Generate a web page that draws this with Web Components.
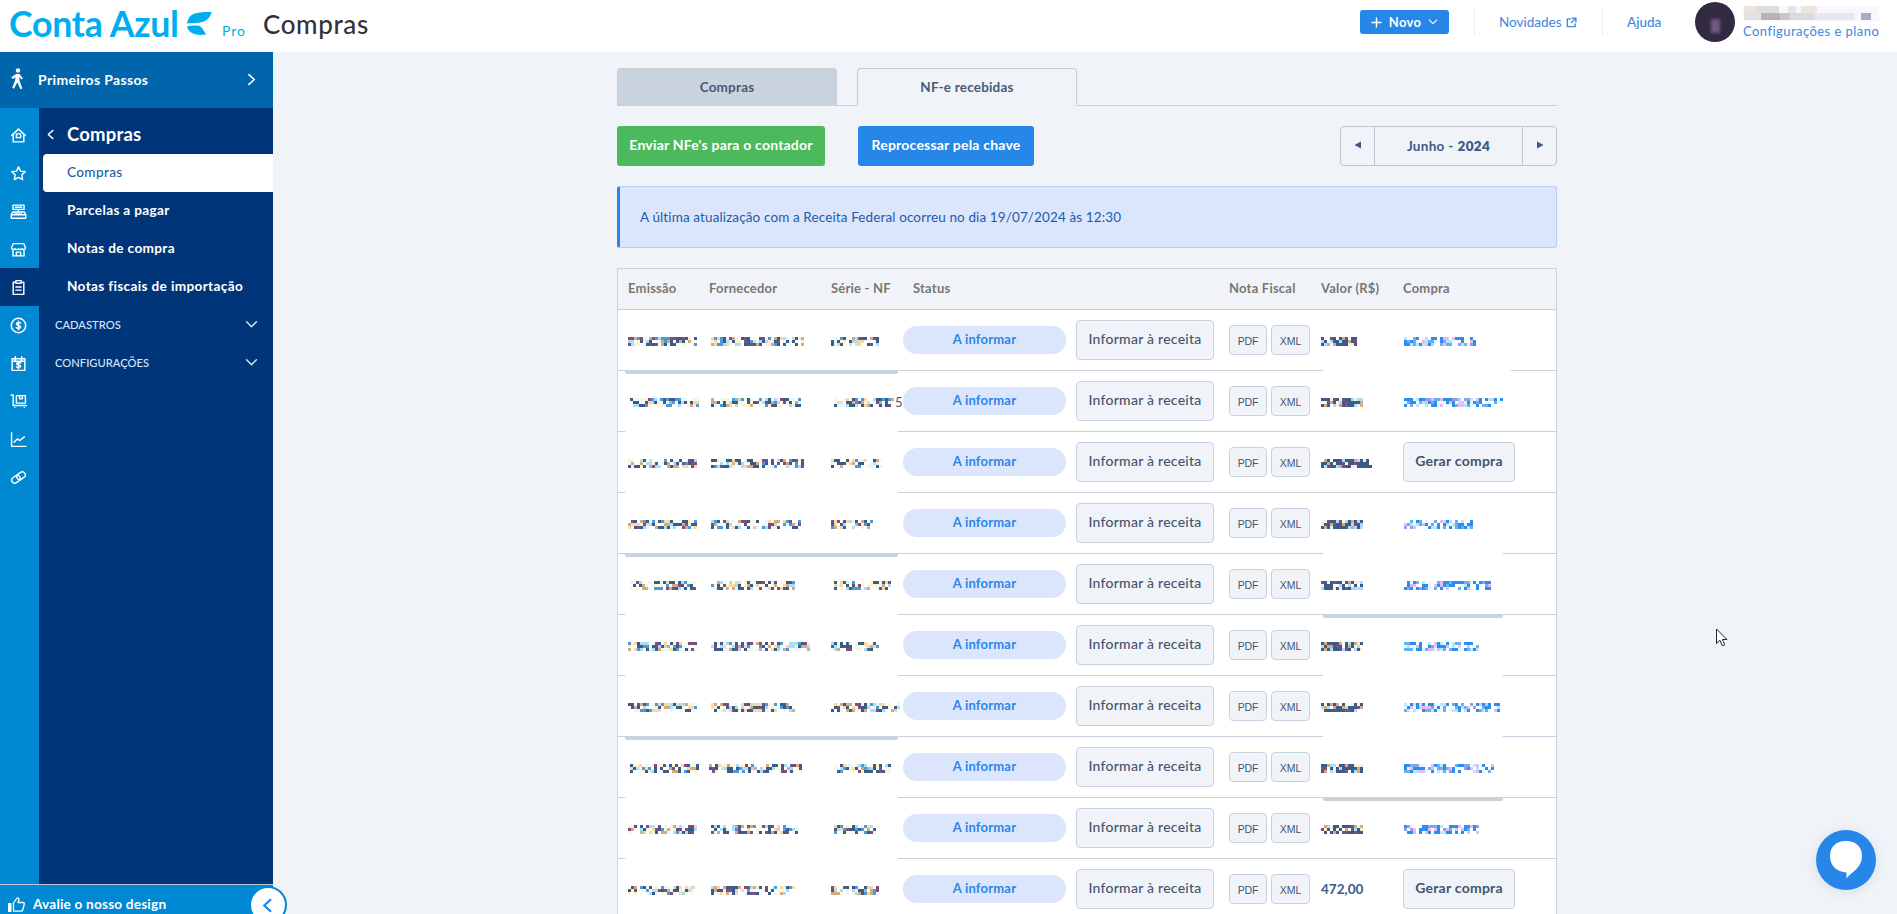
<!DOCTYPE html>
<html lang="pt-BR"><head><meta charset="utf-8"><title>Compras</title>
<style>
html,body{margin:0;height:914px;overflow:hidden;background:#f0f4f9;font-family:Lato,"Liberation Sans",sans-serif}
</style></head><body>
<app-shell></app-shell>
<script>
const ICON={
home:'<path d="M1.500 8 8 2l6.500 6"/><path d="M3 6.800V14h10V6.800"/><rect x="6" y="6.500" width="4" height="3.500"/>',
star:'<path d="M8 1.800l1.900 4 4.400.6-3.200 3 .8 4.400L8 11.700l-3.900 2.100.8-4.400-3.200-3 4.400-.6z"/>',
reg:'<path d="M2.800 2h10.400v4H2.800zM8 6v2.500M5 4h6"/><path d="M2.500 8.500h11l1.300 2.500v3.300H1.200V11zM1.200 11h13.600M4.500 9.800h.1M6.500 9.800h.1M8.500 9.800h.1M10.500 9.800h.1"/>',
store:'<path d="M3 2.500h10l1.700 4a1.900 1.900 0 0 1-3.300.8 2.300 2.300 0 0 1-3.400 0 2.300 2.300 0 0 1-3.400 0 1.900 1.900 0 0 1-3.300-.8z"/><path d="M2.800 8.500V14h10.400V8.500M6 14v-3.500h4V14"/>',
clip:'<path d="M5 3H3v11.500h10V3h-2"/><path d="M5.500 1.500h5V4h-5zM5.500 7.500h5M5.500 10.500h5"/>',
money:'<circle cx="8" cy="8" r="6.800"/><path d="M10 5.800c-.5-.8-3.800-1.200-3.900.8C6 8.400 10 7.500 10 9.400 10 11 6.500 11 6 10M8 3.900v8.200"/>',
cal:'<path d="M2 3.500h12v11H2zM5 1.500v3.500M11 1.500v3.500M2 5.800h12"/><path d="M10 7.600c-.5-.6-3.600-.9-3.700.6-.1 1.500 3.700.8 3.700 2.300 0 1.400-3.300 1.400-3.800.6M8 6.500v6.500"/>',
cart:'<path d="M1 1.800h2v10h12.500"/><path d="M6 2.500h8.500V9.500H6zM9 2.500v3h2.600v-3"/><path d="M4.500 13.500h.1M13.500 13.500h.1"/>',
chart:'<path d="M1.500 1.500V14.500H15M3.800 10.500l3-3 2.400 1.500 4.300-3.500"/>',
link:'<g transform="rotate(-35 8 8)"><rect x=".8" y="5.200" width="8.600" height="5.600" rx="2.800"/><rect x="6.600" y="5.200" width="8.600" height="5.600" rx="2.800"/></g>'
};
const svg=(k,s=16,sw=1.35,c='currentColor')=>`<svg width="${s}" height="${s}" viewBox="0 0 16 16" fill="none" stroke="${c}" stroke-width="${sw}" stroke-linecap="round" stroke-linejoin="round">${ICON[k]}</svg>`;
const chev=(d,c='#fff',s=12,sw=1.4)=>{const p={r:'M4.500 1.500 9.500 6l-5 4.500',l:'M7.500 1.500 2.500 6l5 4.500',d:'M1.500 3.500 6 8l4.500-4.500'}[d];return `<svg width="${s}" height="${s}" viewBox="0 0 12 12" fill="none" stroke="${c}" stroke-width="${sw}" stroke-linecap="round" stroke-linejoin="round"><path d="${p}"/></svg>`};
function def(name,css,html){customElements.define(name,class extends HTMLElement{constructor(){super();this.attachShadow({mode:'open'}).innerHTML=`<style>${css}</style>`+(typeof html==='function'?'':html)}
 connectedCallback(){if(typeof html==='function'&&!this._d){this._d=1;this.shadowRoot.innerHTML+=html(this)}}})}
const PAL={
 warm:['#fff','#fff','#fff','#fdf3d0','#a9defb','#3c5b87','#3c5b87','#3c5b87','#7a4f82','#d6a97e','#4a9ad8','#f6d9a8','#e8f6fd','#fdf8e0'],
 buy:['#fff','#fff','#fff','#2d8cf0','#2d8cf0','#2d8cf0','#e4bcec','#b6e8fc','#8ea2ea','#5bb4f5','#e8f6fd'],
 val:['#fff','#3c5b87','#3c5b87','#3c5b87','#3c5b87','#3c5b87','#d6a97e','#7a4f82','#a9defb','#f8f0d8']
};
def('pix-el',':host{display:inline-block;line-height:0;vertical-align:middle}svg{display:block;overflow:visible}',h=>{
 const w=+h.getAttribute('w'),rows=+(h.getAttribute('rows')||3),cell=+(h.getAttribute('cell')||3);
 let s=(+h.getAttribute('seed')||1)*7919+13;const pal=PAL[h.getAttribute('pal')||'warm'];
 const rnd=()=>(s=(s*1664525+1013904223)>>>0)/4294967296;
 let o='';const n=Math.round(w/cell);
 for(let y=0;y<rows;y++)for(let x=0;x<n;x++){rnd();const c=pal[Math.floor(rnd()*pal.length)];if(c!=='#fff')o+=`<rect x="${x*cell}" y="${y*cell}" width="${cell}" height="${cell}" fill="${c}"/>`}
 return `<svg width="${w}" height="${rows*cell}" shape-rendering="crispEdges">${o}</svg>`});

def('top-bar',`:host{display:flex;align-items:center;height:52px;background:#fff;flex:none;color:#2687e9}
.logo{font:700 35.700px/1 Lato,sans-serif;color:#00aeef;margin:0 0 5px 9px;letter-spacing:-.3px;white-space:nowrap;width:167px;flex:none}
.leaf{margin:0 0 6px 10px;display:block;flex:none}
.pro{font:400 14px/1 Lato,sans-serif;color:#00aeef;margin:9px 0 0 10px;letter-spacing:.9px;width:21px;flex:none}
.ttl{font:500 26px/1 Lato,sans-serif;color:#33323a;margin:0 0 5px 20px;letter-spacing:.6px}
.r{display:flex;align-items:center;margin-left:auto;margin-bottom:8px}
.novo{display:flex;align-items:center;justify-content:center;gap:7px;width:89px;height:24px;background:#2687e9;border-radius:3px;color:#fff;font:700 13px Lato,sans-serif;letter-spacing:.3px}
.div{width:1px;height:26px;background:#e8edf3}
.lnk{font:400 13.500px Lato,sans-serif;color:#3e86e0;display:flex;align-items:center;justify-content:space-between;white-space:nowrap}
.av{width:40px;height:40px;border-radius:50%;background:#322a42;position:relative;overflow:hidden}
.av i{position:absolute;left:16px;top:17px;width:9px;height:14px;background:#6d5a80;filter:blur(1.500px)}
.u{margin-left:8px;margin-right:18px;width:136px;display:flex;flex-direction:column;gap:3px}
.u span{font:400 13px/14px Lato,sans-serif;color:#3e86e0;white-space:nowrap;letter-spacing:.45px}`,
`<span class="logo">Conta Azul</span>
<svg class="leaf" width="26" height="24" viewBox="0 0 26 24" fill="#00aeef"><path d="M1 12.500C1.500 8 4 4.500 8 2.800 12 1 19 .8 25.500 1 24.500 7.500 19 11 13 11.800 8.500 12.300 4.500 12.300 1 12.500z"/><path d="M1 15.500C6 14.500 11 14.300 13.500 15 16 15.800 18 20 20 23.500 14 24.200 10 24 7 22.500 3.500 21 1.500 18.500 1 15.500z"/></svg>
<span class="pro">Pro</span><span class="ttl">Compras</span>
<div class="r"><div class="novo"><svg width="11" height="11" viewBox="0 0 11 11" stroke="#fff" stroke-width="1.500" stroke-linecap="round"><path d="M5.500 1v9M1 5.500h9"/></svg><span>Novo</span>${chev('d','#fff',10,1.3)}</div>
<div class="div" style="margin-left:25px"></div>
<div class="lnk" style="margin-left:24px;width:78px"><span>Novidades</span><svg width="11" height="11" viewBox="0 0 12 12" fill="none" stroke="#3e86e0" stroke-width="1.500"><path d="M5 2H1.500v8.500H10V7M6 1.200h4.800V6M10.500 1.500 5.500 6.500"/></svg></div>
<div class="div" style="margin-left:25px"></div>
<div class="lnk" style="margin-left:24px;margin-right:32px;width:36px;font-weight:500">Ajuda</div>
<div class="av"><i></i></div>
<div class="u"><svg width="136" height="15" shape-rendering="crispEdges"><rect width="136" height="15" fill="#f6f8fb"/><rect x="1" y="0" width="12" height="7" fill="#ede3dc"/><rect x="13" y="0" width="23" height="7" fill="#dddde0"/><rect x="45" y="0" width="8" height="7" fill="#e2e4e8"/><rect x="58" y="0" width="16" height="7" fill="#eee4de"/><rect x="1" y="7" width="17" height="7" fill="#e2e2e4"/><rect x="18" y="7" width="19" height="7" fill="#bdb0b2"/><rect x="37" y="7" width="10" height="7" fill="#cfc5c4"/><rect x="47" y="7" width="25" height="7" fill="#d9dbdf"/><rect x="72" y="7" width="40" height="7" fill="#e6e8ec"/><rect x="118" y="7" width="10" height="7" fill="#a8adc2"/></svg><span>Configurações e plano</span></div></div>`);

def('nav-rail',`:host{display:flex;flex-direction:column;width:39px;flex:none;background:#0089d2;color:#fff;padding-top:8px;box-sizing:border-box}
div{height:38px;display:flex;align-items:center;justify-content:center;flex:none;padding-right:2px}
div.on{background:#00357a}`,
()=>['home','star','reg','store','clip','money','cal','cart','chart','link'].map((k,i)=>`<div class="${i==4?'on':''}">${svg(k,17)}</div>`).join(''));

def('menu-item',`:host{display:flex;align-items:center;height:38px;box-sizing:border-box;color:#fff;font:700 13.600px Lato,sans-serif;padding:0 0 2px 28px;letter-spacing:.35px}
:host([active]){background:#fff;color:#1a5fa3;border-radius:4px 0 0 4px;margin-left:4px;padding-left:24px;font-weight:500}`,'<slot></slot>');
def('menu-group',`:host{display:flex;align-items:center;justify-content:space-between;height:38px;box-sizing:border-box;color:#d3e8f7;font:500 11.200px Lato,sans-serif;padding:0 15px 2px 16px}`,`<slot></slot>${chev('d','#d3e8f7',13,1.3)}`);

def('side-bar',`:host{display:flex;flex-direction:column;width:273px;flex:none;background:#00357a;position:relative}
.pp{height:56px;box-sizing:border-box;background:#0065ab;display:flex;align-items:center;color:#fff;font:700 14px Lato,sans-serif;padding:0 16px 2px 9px;flex:none;letter-spacing:.35px}
.pp span{flex:1;margin-left:13px}
.body{flex:1;display:flex;min-height:0}
.panel{flex:1;display:flex;flex-direction:column}
.head{height:46px;display:flex;align-items:center;color:#fff;font:700 18.500px Lato,sans-serif;padding-left:7px;gap:10px;letter-spacing:.2px;padding-top:6px;box-sizing:border-box;flex:none}
.foot{height:39px;margin-bottom:-9px;background:#0089d2;border-top:1px solid #b9c7d6;display:flex;align-items:center;color:#fff;font:700 13.600px Lato,sans-serif;padding:0 0 0 8px;gap:8px;flex:none;letter-spacing:.2px;box-sizing:border-box}
.col{position:absolute;left:249px;top:834px;width:34px;height:34px;border:2px solid #0089d2;border-radius:50%;background:#fff;display:flex;align-items:center;justify-content:center}`,
`<div class="pp"><svg width="16" height="22" viewBox="0 0 16 22" fill="#fff"><circle cx="9" cy="2.500" r="2.200"/><path d="M7 6h3.500l3.500 4.500-1.400 1-2.300-2.500.3 4 2.800 7.500-2 .8-3.100-7-3.300 6.500-1.800-1 3-7.500.2-3.300-1.800 2L2 9.500z"/></svg><span>Primeiros Passos</span>${chev('r','#fff',13,1.5)}</div>
<div class="body"><nav-rail></nav-rail><div class="panel">
<div class="head">${chev('l','#fff',11,1.5)}<span>Compras</span></div>
<menu-item active>Compras</menu-item><menu-item>Parcelas a pagar</menu-item><menu-item>Notas de compra</menu-item><menu-item>Notas fiscais de importação</menu-item>
<menu-group>CADASTROS</menu-group><menu-group>CONFIGURAÇÕES</menu-group></div></div>
<div class="foot"><svg width="17" height="15" viewBox="0 0 17 15" fill="none" stroke="#fff" stroke-width="1.300" stroke-linejoin="round"><path fill="#fff" stroke="none" d="M0 6h3.500v9H0z"/><path d="M5.500 6 9 1c1.500-.6 2.300.6 1.800 2L10 5.500h5c1.200 0 1.500 1 1.200 2l-1.500 5.500c-.2.800-.8 1.200-1.500 1.200H5.500z"/></svg><span>Avalie o nosso design</span></div>
<div class="col">${chev('l','#2687e9',15,1.800)}</div>`);

def('tab-bar',`:host{display:flex;height:38px;gap:20px;border-bottom:1px solid #c5d2e0;box-sizing:border-box;flex:none}
.t{width:220px;height:38px;box-sizing:border-box;border:1px solid #c5ccd5;border-radius:4px 4px 0 0;display:flex;align-items:center;justify-content:center;font:700 13.500px Lato,sans-serif;color:#475a78;letter-spacing:.2px}
.a{background:#c9d3dd;border-bottom:0;height:37px}
.b{background:#f0f4f9;border-bottom:1px solid #f0f4f9}`,
`<div class="t a">Compras</div><div class="t b">NF-e recebidas</div>`);

def('solid-btn',`:host{display:flex;align-items:center;justify-content:center;height:40px;box-sizing:border-box;padding-bottom:3px;border-radius:3px;color:#fff;font:700 14px Lato,sans-serif;letter-spacing:.2px;background:var(--bg);flex:none}`,'<slot></slot>');

def('month-picker',`:host{display:flex;width:217px;height:40px;box-sizing:border-box;border:1px solid #bfc6cf;border-radius:4px;margin-left:auto;color:#3b5a85;font:700 13.500px Lato,sans-serif;letter-spacing:.3px}
.n{width:33px;display:flex;align-items:center;justify-content:center;flex:none;padding-bottom:3px}
.m{flex:1;border-left:1px solid #bfc6cf;border-right:1px solid #bfc6cf;display:flex;align-items:center;justify-content:center}
.m b{font-weight:800;margin-left:4px}`,
`<div class="n"><svg width="8" height="8" viewBox="0 0 8 8" fill="#3b5a85"><path d="M7 .5v7L.5 4z"/></svg></div><div class="m">Junho - <b>2024</b></div><div class="n"><svg width="8" height="8" viewBox="0 0 8 8" fill="#3b5a85"><path d="M1 .5v7L7.500 4z"/></svg></div>`);

def('info-alert',`:host{display:flex;align-items:center;height:62px;box-sizing:border-box;background:#dbe6fd;border:1px solid #b4cdf9;border-left:3px solid #2687e9;border-radius:3px;padding-left:20px;color:#1c5ba8;font:400 13.500px Lato,sans-serif;letter-spacing:.12px;margin-top:20px;flex:none}`,'<slot></slot>');

def('ghost-btn',`:host{display:flex;align-items:center;justify-content:center;box-sizing:border-box;height:40px;width:var(--w,138px);padding-bottom:3px;background:#f0f4f9;border:1.500px solid #c9d3e0;border-radius:4px;color:#44546f;font:500 14px Lato,sans-serif;letter-spacing:.25px;flex:none}
:host([strong]){font-weight:700}
:host([small]){height:30px;padding:2px 0 0;font:500 10.500px "Liberation Sans",sans-serif;letter-spacing:-.1px}`,'<slot></slot>');

def('status-pill',`:host{display:flex;align-items:center;justify-content:center;width:163px;height:28px;box-sizing:border-box;padding-bottom:2px;border-radius:14px;background:#dbe6fd;color:#2f84e6;font:700 13px Lato,sans-serif;letter-spacing:.2px}`,'<slot></slot>');

const COLS='grid-template-columns:81px 122px 72px 163px 10px 138px 15px 81px 11px 82px 1fr';
def('nf-head',`:host{display:grid;${COLS};align-items:center;height:42px;box-sizing:border-box;border-top:1px solid #c9d3e0;border-bottom:1px solid #c9d3e0;padding:0 0 2px 10px;color:#7b7672;font:700 13px Lato,sans-serif;letter-spacing:.22px}
span{white-space:nowrap}.st{padding-left:10px;grid-column:span 3}`,
`<span>Emissão</span><span>Fornecedor</span><span>Série - NF</span><span class="st">Status</span><span></span><span>Nota Fiscal</span><span></span><span>Valor (R$)</span><span>Compra</span>`);

def('nf-row',`:host{display:grid;${COLS};align-items:center;height:61px;box-sizing:border-box;border-bottom:1px solid #c9d3e0;background:#fff;padding-left:10px;position:relative;overflow:visible}
.c{display:flex;align-items:center;margin-top:2px}
.pair{display:flex;gap:4px}
.pair ghost-btn:first-child{--w:38px}.pair ghost-btn:last-child{--w:39px}
.v{font:700 13.500px Lato,sans-serif;color:#3b5a85;padding-bottom:1px}
.five{font:400 13px Lato,sans-serif;color:#4a5a70;margin-left:1px}
.ln{position:absolute;z-index:1;border-radius:0 0 2px 2px}
.mask{height:2px;bottom:-1.500px;background:#fff}
.thick{height:3px;bottom:-4px;background:#c9d3de}`,
h=>{const d=JSON.parse(h.getAttribute('d'));const seed=+h.getAttribute('n');
 const mos=(v,p,i)=>{const [off,w]=v;return `<pix-el style="margin-left:${off}px" w="${w}" seed="${seed*10+i}" pal="${p}"></pix-el>`};
 const lm=d.l?`<i class="ln ${d.l}" style="left:7px;width:273px"></i>`:'';
 const rm=d.r?`<i class="ln ${d.r}" style="left:705px;width:${d.rw||180}px"></i>`:'';
 return `<div class="c">${mos(d.e,'warm',1)}</div><div class="c">${mos(d.f,'warm',2)}</div><div class="c">${mos(d.s,'warm',3)}${d.five?'<span class="five">5</span>':''}</div>
 <status-pill>A informar</status-pill><span></span><ghost-btn>Informar à receita</ghost-btn><span></span>
 <div class="pair"><ghost-btn small>PDF</ghost-btn><ghost-btn small>XML</ghost-btn></div><span></span>
 ${d.vt?`<div class="v">${d.vt}</div>`:`<div class="c">${mos([0,d.v],'val',4)}</div>`}
 ${d.b?`<div class="c">${mos([1,d.b],'buy',5)}</div>`:`<ghost-btn strong style="--w:112px">Gerar compra</ghost-btn>`}${lm}${rm}`});

const ROWS=[
{e:[0,69],f:[2,93],s:[0,48],v:36,b:72,l:'thick',r:'mask',rw:188},
{e:[2,69],f:[2,90],s:[3,60],five:1,v:42,b:99,l:'mask'},
{e:[0,69],f:[2,93],s:[0,51],v:51,l:'mask'},
{e:[0,69],f:[2,90],s:[0,42],v:42,b:69,l:'thick',r:'mask'},
{e:[2,66],f:[2,84],s:[3,57],v:42,b:87,l:'mask',r:'thick'},
{e:[0,69],f:[2,99],s:[0,48],v:42,b:75,l:'mask',r:'mask'},
{e:[0,69],f:[2,84],s:[0,69],v:42,b:96,l:'thick',r:'mask'},
{e:[2,69],f:[0,93],s:[3,60],v:42,b:90,l:'mask',r:'thick'},
{e:[0,69],f:[2,87],s:[3,45],v:42,b:75,l:'mask'},
{e:[0,69],f:[2,84],s:[0,48],vt:'472,00'}
];
def('nf-table',`:host{display:block;border-left:1px solid #c9d3e0;border-right:1px solid #c9d3e0;margin-top:20px;flex:none}`,
()=>'<nf-head></nf-head>'+ROWS.map((r,i)=>`<nf-row n="${i+1}" d='${JSON.stringify(r)}'></nf-row>`).join(''));

def('chat-fab',`:host{position:fixed;left:1816px;top:830px;width:60px;height:60px;border-radius:50%;background:#2687e9;box-shadow:0 2px 12px rgba(40,60,90,.12);display:flex;align-items:center;justify-content:center}`,
`<svg width="36" height="40" viewBox="0 0 36 40" fill="#fff"><path d="M18 1c10 0 16 6 16 15 0 8-5 13-10 17-2 1.500-4 3.500-5.500 5.500V32.500C9 32 2 26 2 16 2 7 8 1 18 1z"/></svg>`);
def('mouse-cursor',`:host{position:fixed;left:1715px;top:628px;width:14px;height:20px;display:block}`,
`<svg width="14" height="20" viewBox="0 0 14 20" fill="#fff" stroke="#222" stroke-width="1"><path d="M1.500 1v14.500l3.500-3.200 2.300 5.500 2.400-1-2.300-5.300h4.500z"/></svg>`);

def('app-shell',`:host{display:flex;flex-direction:column;height:914px;overflow:hidden}
.b{flex:1;display:flex;min-height:0}
main{flex:1;padding:16px 0 0 344px;min-width:0;overflow:hidden}
.w{width:940px;display:flex;flex-direction:column}
.acts{display:flex;margin-top:20px}`,
`<top-bar></top-bar><div class="b"><side-bar></side-bar><main><div class="w">
<tab-bar></tab-bar>
<div class="acts"><solid-btn style="--bg:#4cba5c;width:208px">Enviar NFe's para o contador</solid-btn><solid-btn style="--bg:#2687e9;width:176px;margin-left:33px">Reprocessar pela chave</solid-btn><month-picker></month-picker></div>
<info-alert>A última atualização com a Receita Federal ocorreu no dia 19/07/2024 às 12:30</info-alert>
<nf-table></nf-table></div></main></div><chat-fab></chat-fab><mouse-cursor></mouse-cursor>`);
</script></body></html>
